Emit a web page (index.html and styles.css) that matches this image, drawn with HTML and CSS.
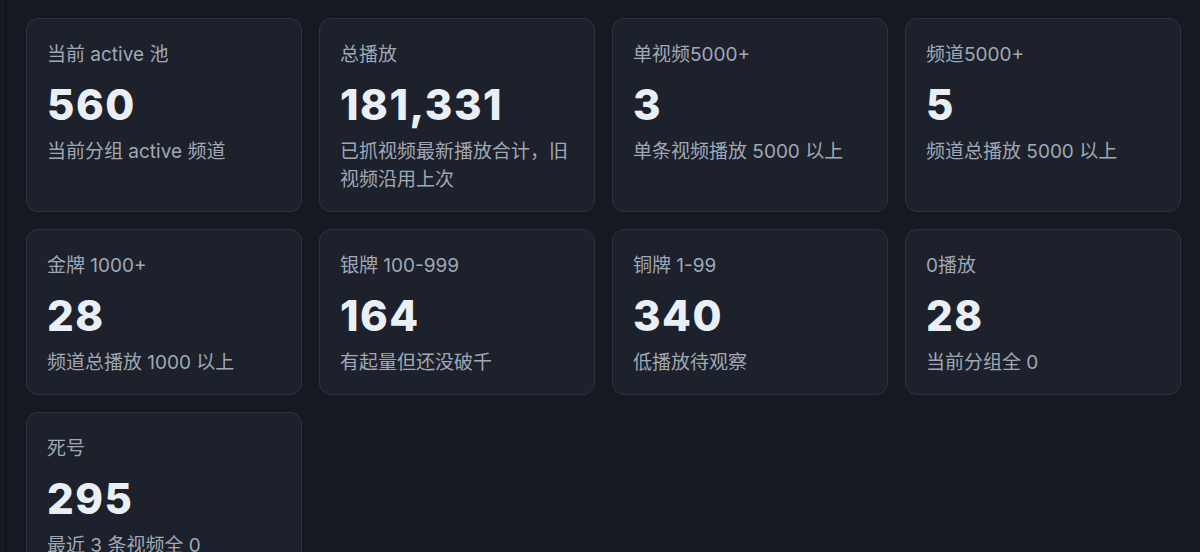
FILE: index.html
```html
<!DOCTYPE html>
<html lang="zh-CN">
<head>
  <meta charset="UTF-8" />
  <meta name="viewport" content="width=device-width, initial-scale=1.0"/>
  <title>频道统计</title>
  <link rel="stylesheet" href="styles.css">
</head>
<body>

<div class="sidebar"></div>

<div class="main">
  <div class="stats">
    <div class="card">
      <div class="label">当前 active 池</div>
      <div class="value">560</div>
      <div class="sub">当前分组 active 频道</div>
    </div>
    <div class="card">
      <div class="label">总播放</div>
      <div class="value">181,331</div>
      <div class="sub">已抓视频最新播放合计，旧视频沿用上次</div>
    </div>
    <div class="card">
      <div class="label">单视频5000+</div>
      <div class="value">3</div>
      <div class="sub">单条视频播放 5000 以上</div>
    </div>
    <div class="card">
      <div class="label">频道5000+</div>
      <div class="value">5</div>
      <div class="sub">频道总播放 5000 以上</div>
    </div>

    <div class="card">
      <div class="label">金牌 1000+</div>
      <div class="value">28</div>
      <div class="sub">频道总播放 1000 以上</div>
    </div>
    <div class="card">
      <div class="label">银牌 100-999</div>
      <div class="value">164</div>
      <div class="sub">有起量但还没破千</div>
    </div>
    <div class="card">
      <div class="label">铜牌 1-99</div>
      <div class="value">340</div>
      <div class="sub">低播放待观察</div>
    </div>
    <div class="card">
      <div class="label">0播放</div>
      <div class="value">28</div>
      <div class="sub">当前分组全 0</div>
    </div>

    <div class="card">
      <div class="label">死号</div>
      <div class="value">295</div>
      <div class="sub">最近 3 条视频全 0</div>
    </div>
  </div>
</div>

</body>
</html>
```

FILE: styles.css
```css
body {
  margin: 0;
  font-family: Inter, "Noto Sans CJK SC", sans-serif;
  background-color: #151a22;
  color: #e8edf5;
  display: flex;
  height: 100vh;
  overflow: hidden;
}
.sidebar {
  width: 5px;
  flex-shrink: 0;
  border-right: 1px solid #0d1117;
}
.main {
  flex: 1;
  padding: 18px 19px 0 20px;
}
.stats {
  display: grid;
  grid-template-columns: repeat(4, 1fr);
  gap: 17px;
}
.card {
  background-color: #1c212b;
  border: 1px solid #2c3340;
  border-radius: 12px;
  padding: 22px 20px 17px;
}
.label {
  font-size: 19px;
  line-height: 28px;
  color: #a0a8b6;
}
.value {
  font-size: 42px;
  font-weight: 800;
  line-height: 48px;
  letter-spacing: 1.5px;
  margin-top: 12px;
  color: #eaeff6;
}
.sub {
  font-size: 19px;
  line-height: 28px;
  margin-top: 9px;
  color: #a0a8b6;
}
```
